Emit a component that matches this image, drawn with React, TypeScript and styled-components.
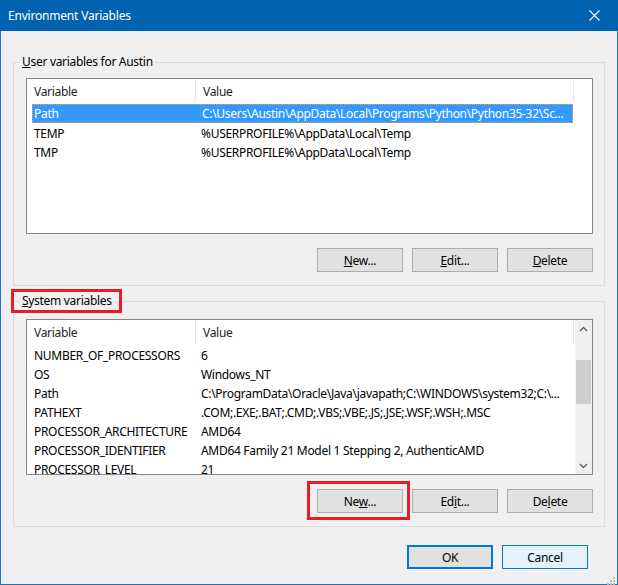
import React from "react";
import styled, { createGlobalStyle } from "styled-components";

const GlobalStyle = createGlobalStyle`
  html, body {
    margin: 0;
    padding: 0;
    background: #f0f0f0;
  }
  body {
    font-family: "Noto Sans", "Open Sans", "DejaVu Sans", sans-serif;
    font-size: 12px;
    letter-spacing: -0.3px;
    color: #000;
  }
`;

// Window frame
const Window = styled.div`
  width: 618px;
  height: 585px;
  box-sizing: border-box;
  border: 1px solid #1d74c4;
  border-top: none;
  background: #f0f0f0;
  display: flex;
  flex-direction: column;
  position: relative;
`;

const TitleBar = styled.div`
  height: 31px;
  margin: 0 -1px;
  background: #0063b1;
  color: #fff;
  display: flex;
  align-items: center;
  justify-content: space-between;
  padding-left: 8px;
  flex-shrink: 0;
`;

const Title = styled.span`
  font-size: 12px;
  line-height: 16px;
  letter-spacing: -0.2px;
`;

const CloseButton = styled.div`
  width: 46px;
  height: 31px;
  display: flex;
  align-items: center;
  justify-content: center;
  margin-right: 1px;
`;

const Body = styled.div`
  flex: 1;
  padding: 23px 12px 0 12px;
  display: flex;
  flex-direction: column;
`;

// Group box
const Group = styled.fieldset<{ $top?: number }>`
  margin: ${(p) => p.$top ?? 0}px 0 0 0;
  border: 1px solid #dcdcdc;
  padding: 0 11px 13px 12px;
  min-width: 0;
`;

const Legend = styled.legend<{ $marked?: boolean }>`
  margin-left: -6px;
  padding: 0 2px;
  font-size: 12px;
  line-height: 16px;
  position: relative;

  ${(p) =>
    p.$marked &&
    `
    &::after {
      content: "";
      position: absolute;
      left: -9px;
      right: -8px;
      top: -4px;
      bottom: -4px;
      border: 3px solid #e81c24;
    }
  `}
`;

const Key = styled.span`
  text-decoration: underline;
  text-underline-offset: 1px;
`;

// List view
const ListView = styled.div<{ $top: number }>`
  margin-top: ${(p) => p.$top}px;
  height: 156px;
  box-sizing: border-box;
  border: 1px solid #828790;
  background: #fff;
  display: flex;
  overflow: hidden;
`;

const ListContent = styled.div`
  flex: 1;
  min-width: 0;
  display: flex;
  flex-direction: column;
`;

const Header = styled.div`
  height: 24px;
  display: grid;
  grid-template-columns: 169px 378px;
  flex-shrink: 0;
`;

const HeaderCell = styled.div`
  padding-left: 7px;
  color: #1e1e1e;
  border-right: 1px solid #e5e5e5;
  margin: 1px 0;
  padding-top: 1px;
  line-height: 21px;
  white-space: nowrap;
  overflow: hidden;
`;

const Rows = styled.div`
  padding-top: 1px;
`;

const Row = styled.div<{ $selected?: boolean }>`
  margin-left: 5px;
  width: 541px;
  height: 19px;
  box-sizing: border-box;
  display: grid;
  grid-template-columns: 163px minmax(0, 1fr);
  line-height: ${(p) => (p.$selected ? 17 : 19)}px;
  padding-top: ${(p) => (p.$selected ? 0 : 1)}px;
  background: ${(p) => (p.$selected ? "#3399ff" : "transparent")};
  color: ${(p) => (p.$selected ? "#fff" : "#000")};
  border: ${(p) => (p.$selected ? "1px dotted #f5a623" : "none")};
`;

const Cell = styled.div<{ $pad: number }>`
  padding-left: ${(p) => p.$pad}px;
  white-space: nowrap;
  overflow: hidden;
`;

// Scrollbar
const ScrollBar = styled.div`
  width: 17px;
  margin-left: 2px;
  background: #f0f0f0;
  display: flex;
  flex-direction: column;
  align-items: center;
  flex-shrink: 0;
`;

const ScrollArrow = styled.div`
  height: 17px;
  width: 100%;
  display: flex;
  align-items: center;
  justify-content: center;
`;

const ScrollTrack = styled.div`
  flex: 1;
  width: 100%;
  padding: 23px 1px 0 1px;
  box-sizing: border-box;
`;

const ScrollThumb = styled.div`
  height: 44px;
  background: #cdcdcd;
`;

// Buttons
const ButtonRow = styled.div<{ $top: number; $right?: number }>`
  margin-top: ${(p) => p.$top}px;
  margin-right: ${(p) => p.$right ?? 0}px;
  display: flex;
  justify-content: flex-end;
  gap: 9px;
`;

const Button = styled.div<{ $variant?: "default" | "primary" | "hover"; $marked?: boolean }>`
  width: 86px;
  height: 24px;
  box-sizing: border-box;
  display: flex;
  align-items: center;
  justify-content: center;
  position: relative;
  font-size: 12px;
  background: ${(p) => (p.$variant === "hover" ? "#e5f1fb" : "#e1e1e1")};
  border: ${(p) =>
    p.$variant === "primary"
      ? "2px solid #0078d7"
      : p.$variant === "hover"
      ? "1px solid #0078d7"
      : "1px solid #adadad"};

  ${(p) =>
    p.$marked &&
    `
    &::after {
      content: "";
      position: absolute;
      left: -11px;
      right: -8px;
      top: -9px;
      bottom: -8px;
      border: 3px solid #e81c24;
    }
  `}
`;

const Grip = styled.div`
  position: absolute;
  right: 2px;
  bottom: 2px;
  width: 10px;
  height: 10px;
`;

type Variable = { name: string; value: string };

const userVars: Variable[] = [
  {
    name: "Path",
    value: "C:\\Users\\Austin\\AppData\\Local\\Programs\\Python\\Python35-32\\Sc...",
  },
  { name: "TEMP", value: "%USERPROFILE%\\AppData\\Local\\Temp" },
  { name: "TMP", value: "%USERPROFILE%\\AppData\\Local\\Temp" },
];

const systemVars: Variable[] = [
  { name: "NUMBER_OF_PROCESSORS", value: "6" },
  { name: "OS", value: "Windows_NT" },
  {
    name: "Path",
    value: "C:\\ProgramData\\Oracle\\Java\\javapath;C:\\WINDOWS\\system32;C:\\...",
  },
  { name: "PATHEXT", value: ".COM;.EXE;.BAT;.CMD;.VBS;.VBE;.JS;.JSE;.WSF;.WSH;.MSC" },
  { name: "PROCESSOR_ARCHITECTURE", value: "AMD64" },
  { name: "PROCESSOR_IDENTIFIER", value: "AMD64 Family 21 Model 1 Stepping 2, AuthenticAMD" },
  { name: "PROCESSOR_LEVEL", value: "21" },
];

const Chevron = ({ up }: { up?: boolean }) => (
  <svg width="9" height="6" viewBox="0 0 9 6">
    <polyline
      points={up ? "1,5 4.5,1.5 8,5" : "1,1 4.5,4.5 8,1"}
      fill="none"
      stroke="#606060"
      strokeWidth="1.4"
    />
  </svg>
);

const VariableList = ({
  items,
  selected,
  top,
  scroll,
}: {
  items: Variable[];
  selected?: number;
  top: number;
  scroll?: boolean;
}) => (
  <ListView $top={top}>
    <ListContent>
      <Header>
        <HeaderCell>Variable</HeaderCell>
        <HeaderCell>Value</HeaderCell>
      </Header>
      <Rows>
        {items.map((v, i) => (
          <Row key={v.name + i} $selected={i === selected}>
            <Cell $pad={i === selected ? 1 : 2}>{v.name}</Cell>
            <Cell $pad={6}>{v.value}</Cell>
          </Row>
        ))}
      </Rows>
    </ListContent>
    {scroll && (
      <ScrollBar>
        <ScrollArrow>
          <Chevron up />
        </ScrollArrow>
        <ScrollTrack>
          <ScrollThumb />
        </ScrollTrack>
        <ScrollArrow>
          <Chevron />
        </ScrollArrow>
      </ScrollBar>
    )}
  </ListView>
);

const App: React.FC = () => {
  return (
    <>
      <GlobalStyle />
      <Window>
        <TitleBar>
          <Title>Environment Variables</Title>
          <CloseButton>
            <svg width="11" height="11" viewBox="0 0 11 11">
              <path d="M0.5 0.5 L10.5 10.5 M10.5 0.5 L0.5 10.5" stroke="#fff" strokeWidth="1.1" />
            </svg>
          </CloseButton>
        </TitleBar>

        <Body>
          <Group>
            <Legend>
              <Key>U</Key>ser variables for Austin
            </Legend>
            <VariableList items={userVars} selected={0} top={8} />
            <ButtonRow $top={14}>
              <Button>
                <span>
                  <Key>N</Key>ew...
                </span>
              </Button>
              <Button>
                <span>
                  <Key>E</Key>dit...
                </span>
              </Button>
              <Button>
                <span>
                  <Key>D</Key>elete
                </span>
              </Button>
            </ButtonRow>
          </Group>

          <Group $top={7}>
            <Legend $marked>
              <Key>S</Key>ystem variables
            </Legend>
            <VariableList items={systemVars} top={10} scroll />
            <ButtonRow $top={14}>
              <Button $marked>
                <span>
                  Ne<Key>w</Key>...
                </span>
              </Button>
              <Button>
                <span>
                  Ed<Key>i</Key>t...
                </span>
              </Button>
              <Button>
                <span>
                  De<Key>l</Key>ete
                </span>
              </Button>
            </ButtonRow>
          </Group>

          <ButtonRow $top={18} $right={17}>
            <Button $variant="primary">OK</Button>
            <Button $variant="hover">Cancel</Button>
          </ButtonRow>
        </Body>

        <Grip>
          <svg width="10" height="10" viewBox="0 0 10 10">
            {[
              [8, 0],
              [8, 3],
              [5, 3],
              [8, 6],
              [5, 6],
              [2, 6],
            ].map(([x, y], i) => (
              <rect key={i} x={x} y={y + 2} width="2" height="2" fill="#b8b8b8" />
            ))}
          </svg>
        </Grip>
      </Window>
    </>
  );
};

export default App;
